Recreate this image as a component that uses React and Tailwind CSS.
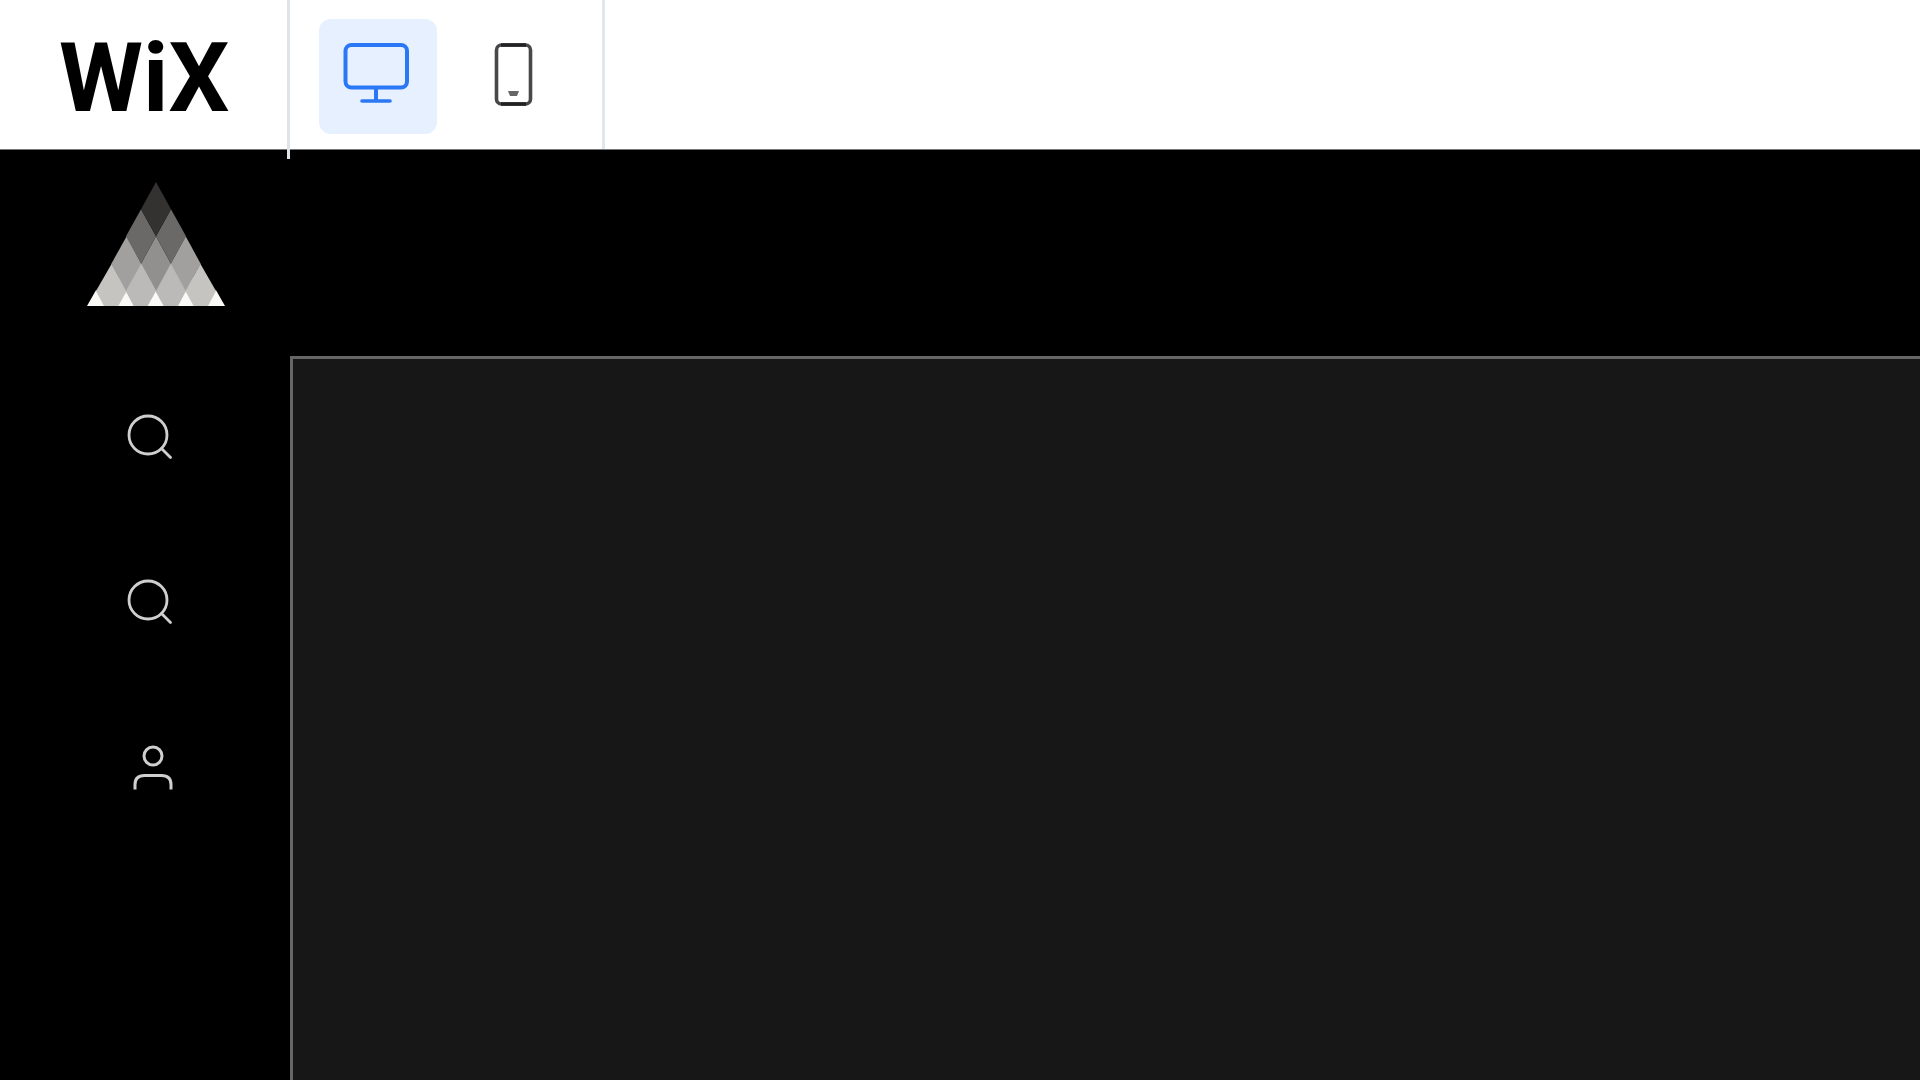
import React, { useState } from 'react';

const NAV_ITEMS = [
  { id: 'search', label: 'Search', Icon: SearchIcon },
  { id: 'explore', label: 'Explore', Icon: SearchIcon },
  { id: 'account', label: 'Account', Icon: UserIcon },
];

const DEVICES = [
  { id: 'desktop', label: 'Desktop', Icon: DesktopIcon },
  { id: 'mobile', label: 'Mobile', Icon: MobileIcon },
];

function DesktopIcon() {
  return (
    <svg className="w-[72px] h-[68px]" viewBox="0 0 72 68" fill="none" stroke="#2b78f6" strokeWidth="4" aria-hidden="true">
      <rect x="3.500" y="5" width="61.500" height="42.500" rx="6" />
      <path d="M34 48v12" />
      <path d="M20 61h28" strokeLinecap="round" strokeWidth="3.6" />
    </svg>
  );
}

function MobileIcon() {
  return (
    <svg className="w-[72px] h-[68px]" viewBox="0 0 72 68" fill="none" aria-hidden="true">
      <rect x="18.500" y="5" width="34" height="59" rx="5" stroke="#48484b" strokeWidth="3.6" />
      <path d="M23 5h25M23 64h25" stroke="#222225" strokeWidth="3.6" />
      <path d="M30 51h11l-2 5h-7z" fill="#666" />
    </svg>
  );
}

function SearchIcon() {
  return (
    <svg className="w-[60px] h-12" viewBox="0 0 60 48" fill="none" stroke="#cfcfcf" strokeWidth="2.8" aria-hidden="true">
      <circle cx="22" cy="22" r="19" />
      <path d="M35.500 35.500l9 9" strokeLinecap="round" />
    </svg>
  );
}

function UserIcon() {
  return (
    <svg className="w-[60px] h-12" viewBox="0 0 60 48" fill="none" stroke="#cfcfcf" strokeWidth="3" aria-hidden="true">
      <circle cx="27" cy="13" r="9" />
      <path d="M9 46.500v-5q0-9 9.500-9h17q9.500 0 9.500 9v5" />
    </svg>
  );
}

function Pyramid() {
  return (
    <svg className="w-[138px] h-[124px]" viewBox="0 0 414 372" role="img" aria-label="Site logo">
      <path d="M26 326L162 245h90l136 81 26 46H0z" fill="#faf9f5" />
      {/* bottom row, cut off by the base */}
      <path d="M74 245l45 82-25 45H51l-24-45z" fill="#c5c4c1" />
      <path d="M340 245l47 82-24 45h-43l-25-45z" fill="#c5c4c1" />
      <path d="M162 245l45 82-25 45h-42l-24-45z" fill="#bbbab8" />
      <path d="M252 245l45 82-24 45h-43l-25-45z" fill="#bbbab8" />
      <path d="M119 163l44 82-46 82-44-82z" fill="#a1a09f" />
      <path d="M296 163l45 82-45 82-45-82z" fill="#a1a09f" />
      <path d="M207 163l45 82-45 82-45-82z" fill="#91908f" />
      <path d="M162 82l45 81-45 82-45-82z" fill="#6a6968" />
      <path d="M252 82l45 81-45 82-45-82z" fill="#6a6968" />
      <path d="M207 0l45 82-45 81-45-81z" fill="#333231" />
    </svg>
  );
}

function Header({ device, onDevice }) {
  return (
    <header className="relative z-10 flex items-start h-[150px] bg-white border-b border-[#777777]">
      <a
        href="#home"
        className="w-[287px] h-[149px] pt-1.5 pl-[59px] flex items-center font-['Roboto',sans-serif] font-bold text-[96px] leading-none text-black"
      >
        WiX
      </a>
      <div className="w-[3px] h-[159px] bg-[#dfe4e8]" />
      <div className="flex h-[149px] pl-[29px] pt-[19px] pr-[29px] gap-[18px] border-r-3 border-[#e0e7ee]">
        {DEVICES.map(({ id, label, Icon }) => (
          <button
            key={id}
            type="button"
            aria-label={label}
            aria-pressed={device === id}
            onClick={() => onDevice(id)}
            className={`w-[118px] h-[115px] pt-[21px] rounded-xl flex items-start justify-center ${device === id ? 'bg-[#e7f0ff]' : ''}`}
          >
            <Icon />
          </button>
        ))}
      </div>
    </header>
  );
}

function Sidebar() {
  return (
    <aside className="w-[290px] shrink-0 pt-8 pl-[87px]">
      <a href="#home" className="block w-[138px]">
        <Pyramid />
      </a>
      <nav className="mt-[107px] pl-[39px] flex flex-col items-start gap-[117px]">
        {NAV_ITEMS.map(({ id, label, Icon }) => (
          <button key={id} type="button" aria-label={label}>
            <Icon />
          </button>
        ))}
      </nav>
    </aside>
  );
}

export default function App() {
  const [device, setDevice] = useState('desktop');

  return (
    <div className="min-h-screen flex flex-col bg-black">
      <Header device={device} onDevice={setDevice} />
      <div className="flex flex-1">
        <Sidebar />
        <main className="flex-1 mt-[206px] bg-[#171717] border-t-3 border-l-3 border-[#666666]" />
      </div>
    </div>
  );
}
